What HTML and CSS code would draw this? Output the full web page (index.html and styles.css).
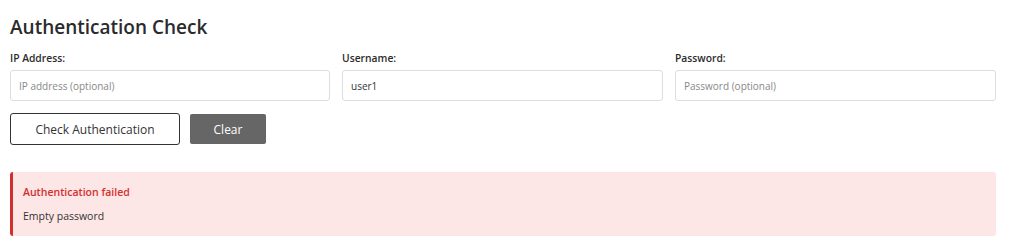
FILE: index.html
```html
<!DOCTYPE html>
<html lang="en">
<head>
    <meta charset="UTF-8">
    <meta name="viewport" content="width=device-width, initial-scale=1.0">
    <title>Authentication Check</title>
    <link rel="stylesheet" href="styles.css">
</head>
<body>
    <div id="auth-check">
        <h2>Authentication Check</h2>
        <div class="fields">
            <div class="field">
                <label for="ip">IP Address:</label>
                <input id="ip" type="text" placeholder="IP address (optional)">
            </div>
            <div class="field">
                <label for="username">Username:</label>
                <input id="username" type="text" value="user1">
            </div>
            <div class="field">
                <label for="password">Password:</label>
                <input id="password" type="password" placeholder="Password (optional)">
            </div>
        </div>
        <div class="actions">
            <button class="check-button">Check Authentication</button>
            <button class="clear-button">Clear</button>
        </div>
        <div class="result error">
            <div class="result-title">Authentication failed</div>
            <div class="result-message">Empty password</div>
        </div>
    </div>
</body>
</html>
```

FILE: styles.css
```css
body {
    margin: 0;
    padding: 10px;
    font-family: "Open Sans", "Noto Sans", sans-serif;
    color: #333;
    background-color: #fff;
}

#auth-check {
    width: 986px;
}

h2 {
    margin: 4px 0 11px 0;
    font-size: 19px;
    font-weight: 600;
    color: #2b2b2b;
}

.fields {
    display: grid;
    grid-template-columns: 320px 321px 321px;
    gap: 12px;
}

.field label {
    display: block;
    font-size: 10.3px;
    font-weight: 600;
    color: #2b2b2b;
    margin-bottom: 5px;
}

.field input {
    box-sizing: border-box;
    width: 100%;
    height: 31px;
    padding: 0 8px;
    font-family: inherit;
    font-size: 10px;
    color: #333;
    border: 1px solid #ddd;
    border-radius: 3px;
}

.field input::placeholder {
    color: #888;
}

.actions {
    display: flex;
    align-items: center;
    gap: 10px;
    margin-top: 12px;
}

button {
    font-family: inherit;
    font-size: 12px;
    cursor: pointer;
}

.check-button {
    width: 170px;
    height: 32px;
    background-color: #fff;
    color: #333;
    border: 1px solid #333;
    border-radius: 3px;
}

.clear-button {
    width: 76px;
    height: 30px;
    background-color: #666;
    color: #fff;
    border: none;
    border-radius: 2px;
}

.result {
    margin-top: 27px;
    padding: 13px 12px 13px 10px;
    border-radius: 3px;
}

.result.error {
    background-color: #fde6e6;
    border-left: 3px solid #d32f2f;
}

.result-title {
    color: #d32f2f;
    font-size: 10.5px;
    font-weight: 600;
    margin-bottom: 10px;
}

.result-message {
    font-size: 10.5px;
}
```
